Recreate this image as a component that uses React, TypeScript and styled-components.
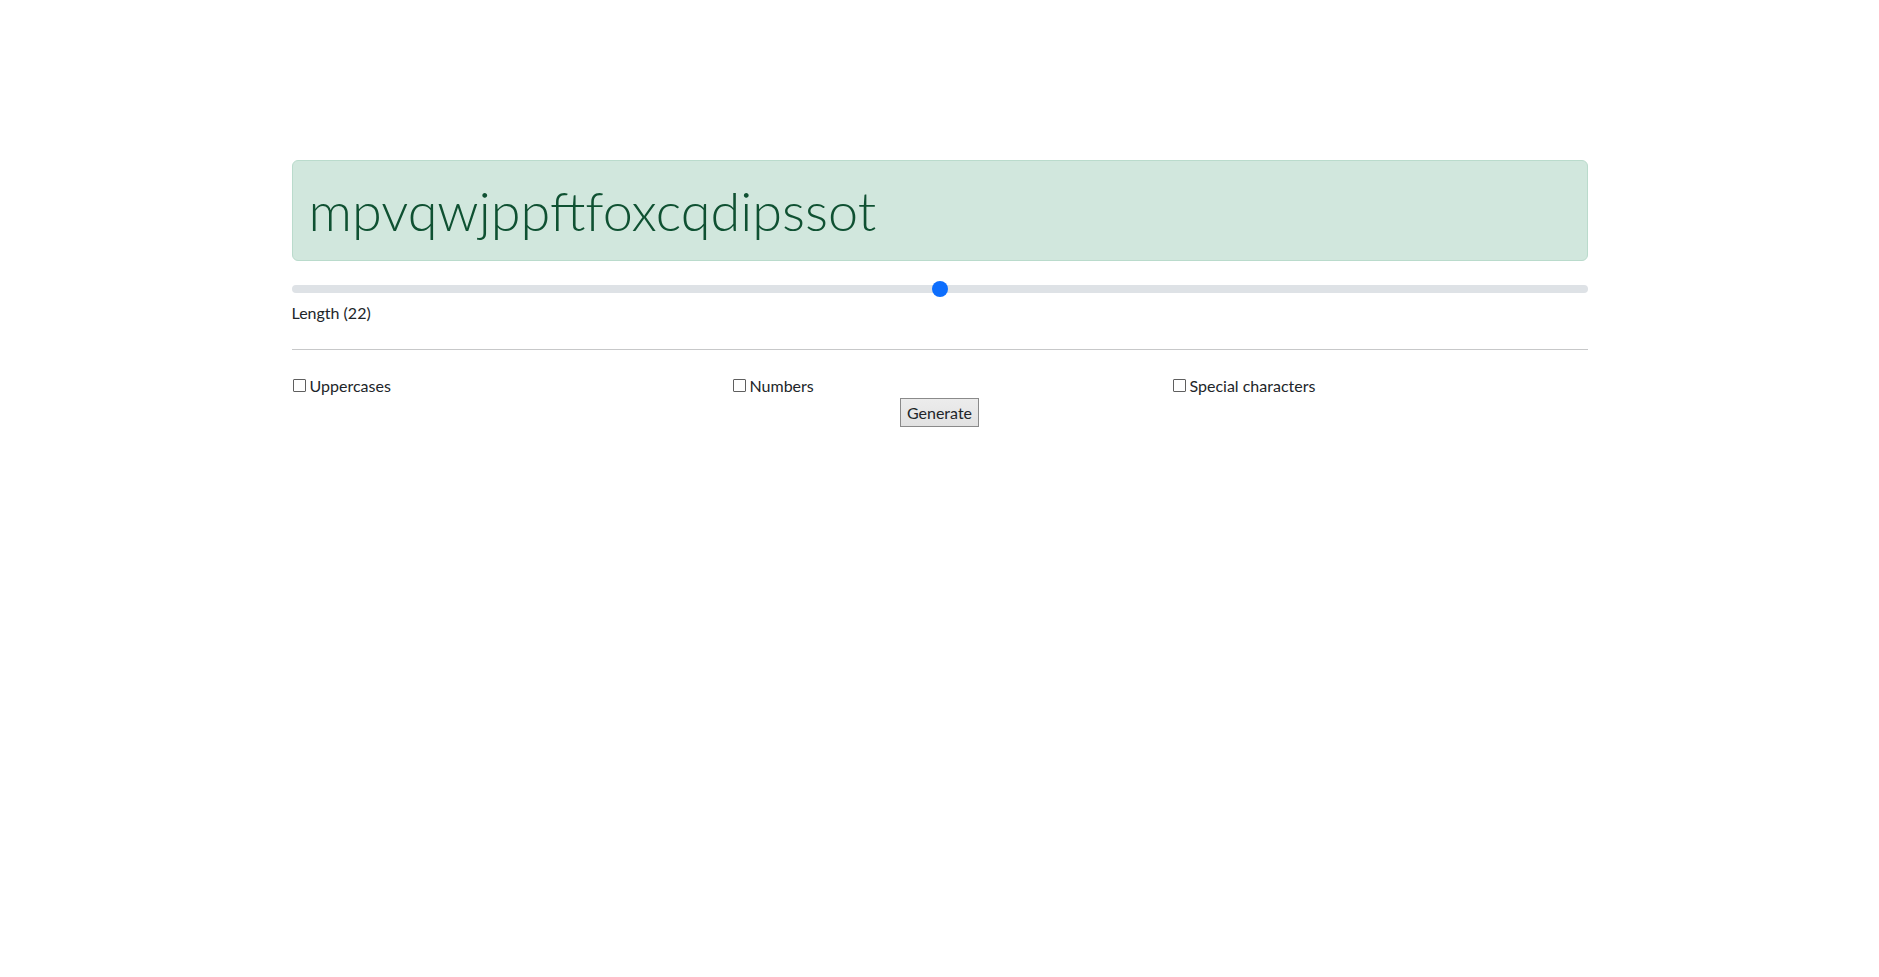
import React, { useState } from "react";
import styled, { createGlobalStyle } from "styled-components";

const GlobalStyle = createGlobalStyle`
  *, *::before, *::after { box-sizing: border-box; }
  html, body { margin: 0; padding: 0; background: #ffffff; }
  body {
    font-family: "Lato", "Open Sans", "Liberation Sans", sans-serif;
    font-size: 16px;
    line-height: 1.5;
    color: #212529;
  }
`;

const Container = styled.main`
  max-width: 1320px;
  margin: 0 auto;
  padding: 160px 12px 0;
`;

const PasswordAlert = styled.div`
  background: #d1e7dd;
  border: 1px solid #badbcc;
  border-radius: 6px;
  color: #0f5132;
  padding: 17px 16px 16px;
  margin-bottom: 16px;
  font-family: "Lato", "Open Sans", sans-serif;
  font-weight: 300;
  font-size: 54px;
  line-height: 66px;
`;

const Range = styled.input`
  display: block;
  width: 100%;
  height: 24px;
  margin: 0;
  padding: 0;
  background: transparent;
  appearance: none;
  -webkit-appearance: none;

  &:focus { outline: none; }

  &::-webkit-slider-runnable-track {
    width: 100%;
    height: 8px;
    background: #dee2e6;
    border-radius: 16px;
    border: 0;
  }

  &::-webkit-slider-thumb {
    -webkit-appearance: none;
    appearance: none;
    width: 16px;
    height: 16px;
    margin-top: -4px;
    border: 0;
    border-radius: 50%;
    background: #0d6efd;
  }
`;

const Label = styled.label`
  display: inline-block;
  margin-bottom: 8px;
  font-size: 16px;
  line-height: 24px;
`;

const Divider = styled.hr`
  margin: 16px 0;
  border: 0;
  border-top: 1px solid #212529;
  opacity: 0.25;
  color: inherit;
`;

const Options = styled.div`
  display: grid;
  grid-template-columns: repeat(3, 1fr);
  column-gap: 24px;
  margin-top: 24px;
`;

const Option = styled.label`
  display: block;
  font-size: 16px;
  line-height: 24px;
`;

const Check = styled.input`
  appearance: none;
  -webkit-appearance: none;
  display: inline-block;
  width: 13px;
  height: 13px;
  margin: 0 4px 0 1px;
  border: 1px solid #5f5f5f;
  border-radius: 1px;
  background: #fff;
  vertical-align: baseline;

  &:checked {
    background: #0d6efd;
    border-color: #0d6efd;
  }
`;

const Actions = styled.div`
  display: flex;
  justify-content: center;
`;

const Button = styled.button`
  font-family: inherit;
  font-size: 16px;
  line-height: 24px;
  color: #212529;
  padding: 2px 6px 1px;
  background: linear-gradient(#ececec, #e2e2e2);
  border: 1px solid #8a8a8a;
  border-radius: 0;
  cursor: pointer;
`;

export default function App() {
  const [length, setLength] = useState(22);
  const [opts, setOpts] = useState({ upper: false, numbers: false, special: false });

  return (
    <>
      <GlobalStyle />
      <Container>
        <PasswordAlert>mpvqwjppftfoxcqdipssot</PasswordAlert>
        <Range
          type="range"
          min={4}
          max={40}
          value={length}
          onChange={(e) => setLength(Number(e.target.value))}
        />
        <Label>Length ({length})</Label>
        <Divider />
        <Options>
          <Option>
            <Check
              type="checkbox"
              checked={opts.upper}
              onChange={() => setOpts({ ...opts, upper: !opts.upper })}
            />
            Uppercases
          </Option>
          <Option>
            <Check
              type="checkbox"
              checked={opts.numbers}
              onChange={() => setOpts({ ...opts, numbers: !opts.numbers })}
            />
            Numbers
          </Option>
          <Option>
            <Check
              type="checkbox"
              checked={opts.special}
              onChange={() => setOpts({ ...opts, special: !opts.special })}
            />
            Special characters
          </Option>
        </Options>
        <Actions>
          <Button type="button">Generate</Button>
        </Actions>
      </Container>
    </>
  );
}
